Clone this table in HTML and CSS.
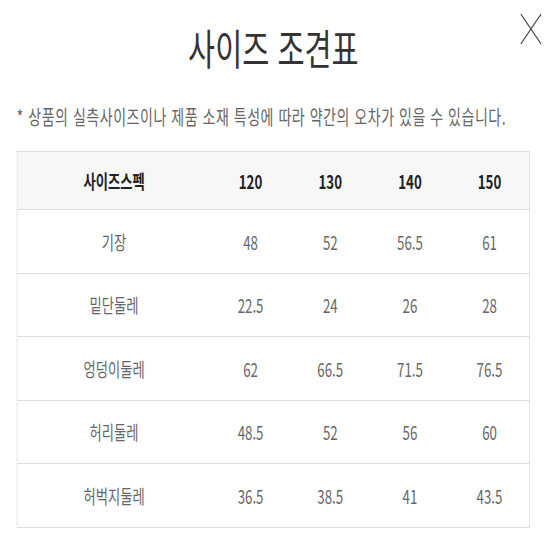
FILE: index.html
```html
<!DOCTYPE html>
<html lang="ko">
<head>
<meta charset="utf-8">
<title>사이즈 조견표</title>
<link rel="stylesheet" href="styles.css">
</head>
<body>
<div class="viewport">
<div class="page">
  <button class="close" aria-label="닫기">
    <svg viewBox="0 0 31 32" width="31" height="32"><path d="M1 1 L30 31 M30 1 L1 31" stroke="#444" stroke-width="1.4" fill="none"/></svg>
  </button>
  <h1 class="title">사이즈 조견표</h1>
  <p class="note">* 상품의 실측사이즈이나 제품 소재 특성에 따라 약간의 오차가 있을 수 있습니다.</p>
  <table class="size-table">
    <thead>
      <tr><th class="label">사이즈스펙</th><th>120</th><th>130</th><th>140</th><th>150</th></tr>
    </thead>
    <tbody>
      <tr><td class="label">기장</td><td>48</td><td>52</td><td>56.5</td><td>61</td></tr>
      <tr><td class="label">밑단둘레</td><td>22.5</td><td>24</td><td>26</td><td>28</td></tr>
      <tr><td class="label">엉덩이둘레</td><td>62</td><td>66.5</td><td>71.5</td><td>76.5</td></tr>
      <tr><td class="label">허리둘레</td><td>48.5</td><td>52</td><td>56</td><td>60</td></tr>
      <tr><td class="label">허벅지둘레</td><td>36.5</td><td>38.5</td><td>41</td><td>43.5</td></tr>
    </tbody>
  </table>
</div>
</div>
</body>
</html>
```
FILE: styles.css
```css
html, body {
  margin: 0;
  padding: 0;
  background: #fff;
}
body {
  font-family: "Noto Sans CJK KR", "Noto Sans", sans-serif;
  overflow: hidden;
}
.viewport {
  width: 550px;
  height: 550px;
  overflow: hidden;
}
.page {
  position: relative;
  width: 786px;
  height: 550px;
  transform: scaleX(0.7);
  transform-origin: 0 0;
  padding: 0 29px 0 24px;
  box-sizing: border-box;
}
.close {
  position: absolute;
  top: 13px;
  left: 743px;
  padding: 0;
  border: 0;
  background: none;
  line-height: 0;
}
.title {
  margin: 0;
  padding-top: 21px;
  font-size: 42px;
  line-height: 52px;
  font-weight: 400;
  color: #333;
  text-align: center;
}
.note {
  margin: 32px 0 0;
  font-size: 20px;
  line-height: 24px;
  letter-spacing: 0.75px;
  color: #666;
}
.size-table {
  margin-top: 22px;
  width: 733px;
  border-collapse: collapse;
  table-layout: fixed;
  font-size: 19px;
}
.size-table th,
.size-table td {
  border-top: 1px solid #ddd;
  border-bottom: 1px solid #ddd;
  text-align: center;
  padding: 0;
}
.size-table th {
  height: 57px;
  background: #f7f7f7;
  color: #222;
  font-weight: 700;
}
.size-table td {
  height: 62.5px;
  color: #666;
}
.size-table .label {
  width: 276px;
  border-left: 1px solid #ddd;
}
.size-table tr > :last-child {
  border-right: 1px solid #ddd;
}
```
